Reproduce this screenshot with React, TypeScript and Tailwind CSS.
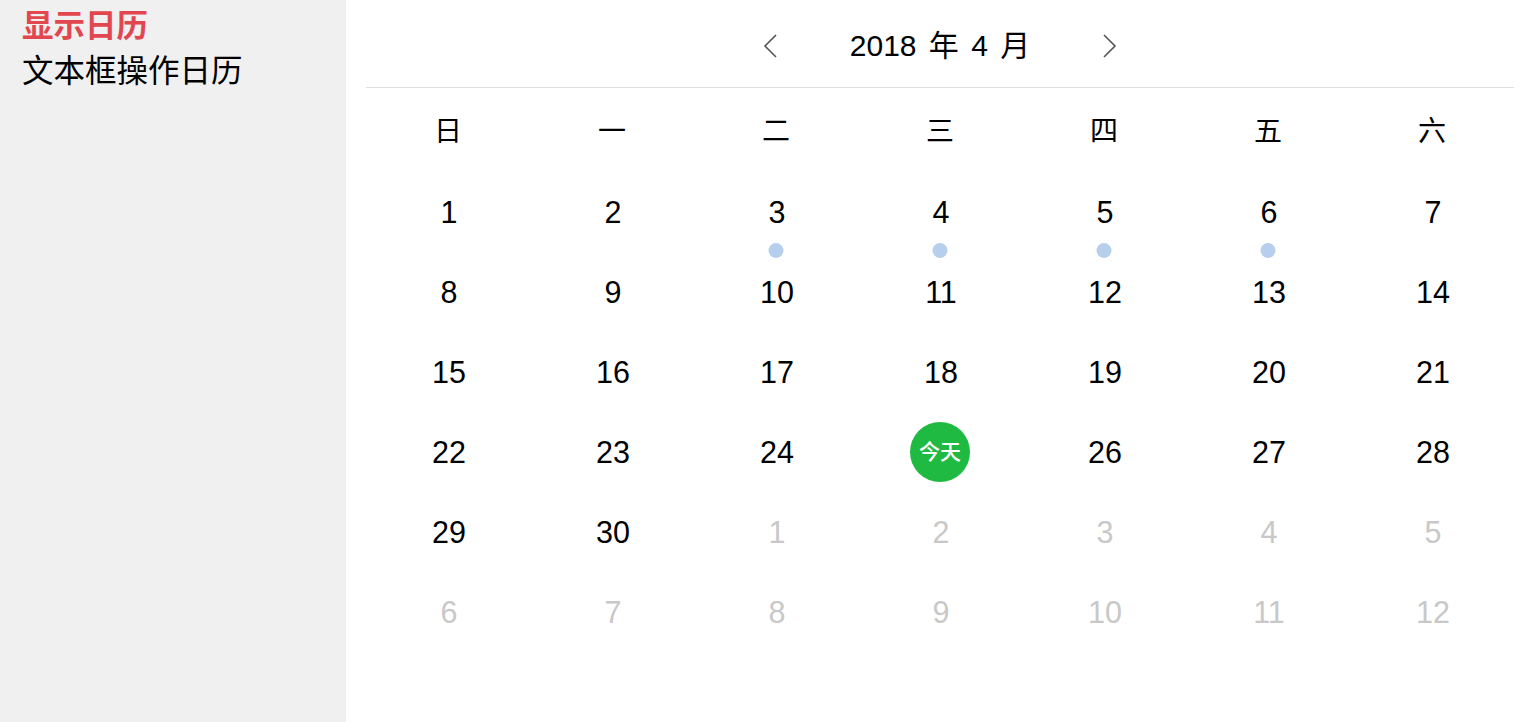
import React from "react";

const FONT = { fontFamily: '"Liberation Sans", "Noto Sans CJK SC", sans-serif' };

type Cell = { d: number; muted?: boolean; dot?: boolean; today?: boolean };

const weeks: Cell[][] = [
  [{ d: 1 }, { d: 2 }, { d: 3, dot: true }, { d: 4, dot: true }, { d: 5, dot: true }, { d: 6, dot: true }, { d: 7 }],
  [{ d: 8 }, { d: 9 }, { d: 10 }, { d: 11 }, { d: 12 }, { d: 13 }, { d: 14 }],
  [{ d: 15 }, { d: 16 }, { d: 17 }, { d: 18 }, { d: 19 }, { d: 20 }, { d: 21 }],
  [{ d: 22 }, { d: 23 }, { d: 24 }, { d: 25, today: true }, { d: 26 }, { d: 27 }, { d: 28 }],
  [{ d: 29 }, { d: 30 }, { d: 1, muted: true }, { d: 2, muted: true }, { d: 3, muted: true }, { d: 4, muted: true }, { d: 5, muted: true }],
  [{ d: 6, muted: true }, { d: 7, muted: true }, { d: 8, muted: true }, { d: 9, muted: true }, { d: 10, muted: true }, { d: 11, muted: true }, { d: 12, muted: true }],
];

const weekdays = ["日", "一", "二", "三", "四", "五", "六"];

export default function App() {
  return (
    <div className="flex h-[722px] w-[1520px] overflow-hidden bg-white" style={FONT}>
      <aside className="w-[346px] shrink-0 bg-[#f0f0f0] pl-[22px] pt-[4px]">
        <div className="text-[31.5px] leading-[45px] font-bold text-[#e2474f]">显示日历</div>
        <div className="text-[31.5px] leading-[45px] text-black">文本框操作日历</div>
      </aside>
      <main className="flex-1 pl-[20px]">
        <div className="w-[1148px]">
          <div className="flex h-[88px] items-center justify-center border-b border-[#dddddd] pt-[5px]">
            <button className="flex h-[40px] w-[40px] items-center justify-center">
              <svg width="16" height="26" viewBox="0 0 16 26" fill="none">
                <path d="M14 2 L3 13 L14 24" stroke="#555" strokeWidth="1.6" />
              </svg>
            </button>
            <div className="w-[300px] text-center text-[30px] leading-[40px] text-black [word-spacing:4px]">
              2018 年 4 月
            </div>
            <button className="flex h-[40px] w-[40px] items-center justify-center">
              <svg width="16" height="26" viewBox="0 0 16 26" fill="none">
                <path d="M2 2 L13 13 L2 24" stroke="#555" strokeWidth="1.6" />
              </svg>
            </button>
          </div>
          <div className="grid h-[84px] grid-cols-7 items-center pt-[4px]">
            {weekdays.map((w) => (
              <div key={w} className="text-center text-[28px] text-black">
                {w}
              </div>
            ))}
          </div>
          {weeks.map((row, i) => (
            <div key={i} className="grid h-[80px] grid-cols-7">
              {row.map((c, j) => (
                <div key={j} className="relative flex items-center justify-center pl-[2px]">
                  {c.today ? (
                    <div className="mr-[2px] flex h-[60px] w-[60px] items-center justify-center rounded-full bg-[#1fba41] text-[21px] font-medium text-white">
                      今天
                    </div>
                  ) : (
                    <span className={`pt-[1px] text-[30.5px] ${c.muted ? "text-[#c8c8c8]" : "text-black"}`}>{c.d}</span>
                  )}
                  {c.dot && (
                    <span className="absolute left-1/2 top-[71px] h-[15px] w-[15px] -translate-x-1/2 rounded-full bg-[#b5cfec]" />
                  )}
                </div>
              ))}
            </div>
          ))}
        </div>
      </main>
    </div>
  );
}
